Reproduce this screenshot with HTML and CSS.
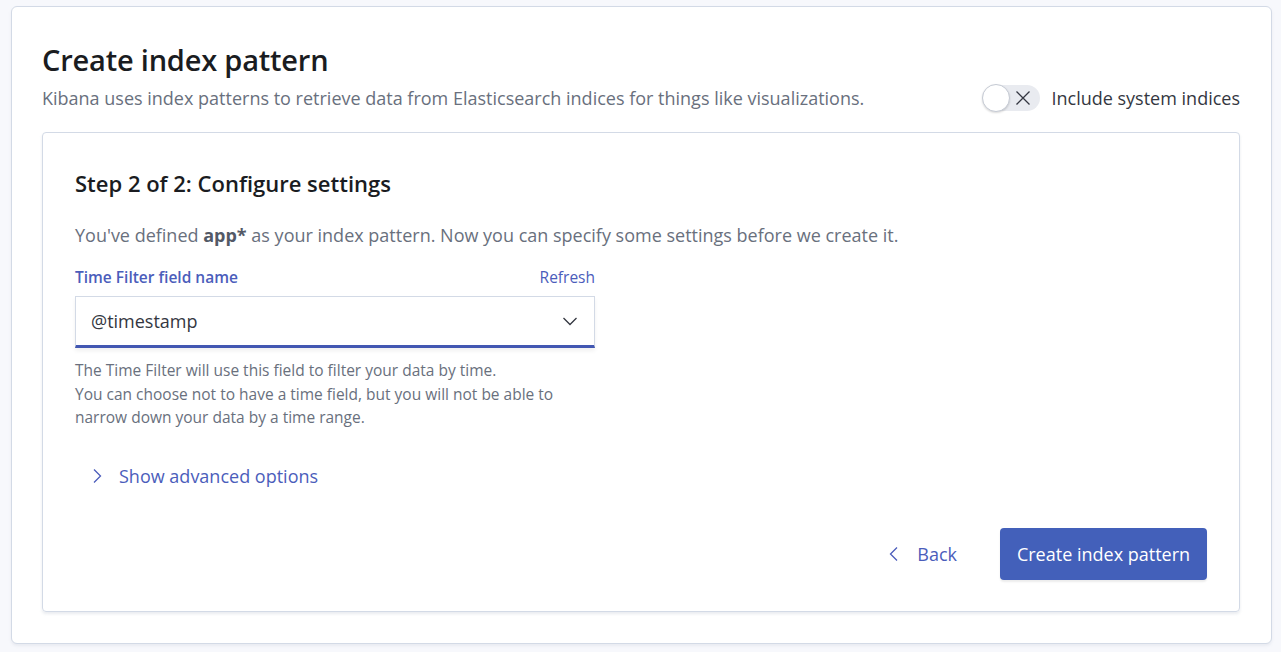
FILE: index.html
```html
<!DOCTYPE html>
<html lang="en">
<head>
<meta charset="utf-8">
<title>Create index pattern</title>
<link rel="stylesheet" href="styles.css">
</head>
<body>
<div class="page">
  <div class="outer">
    <div class="header">
      <div class="header-text">
        <h1 class="title">Create index pattern</h1>
        <p class="subtitle">Kibana uses index patterns to retrieve data from Elasticsearch indices for things like visualizations.</p>
      </div>
      <div class="toggle-wrap">
        <span class="switch">
          <span class="knob"></span>
          <svg class="switch-x" width="16" height="16" viewBox="0 0 16 16"><path d="M1.5 1.5 L14.5 14.5 M14.5 1.5 L1.5 14.5" stroke="#343741" stroke-width="1.3" fill="none"/></svg>
        </span>
        <span class="toggle-label">Include system indices</span>
      </div>
    </div>
    <div class="inner">
      <h2 class="step">Step 2 of 2: Configure settings</h2>
      <p class="desc">You've defined <strong>app*</strong> as your index pattern. Now you can specify some settings before we create it.</p>
      <div class="field">
        <div class="field-head">
          <span class="field-label">Time Filter field name</span>
          <span class="refresh">Refresh</span>
        </div>
        <div class="select">
          <span class="select-value">@timestamp</span>
          <svg class="select-chev" width="16" height="16" viewBox="0 0 16 16"><path d="M1.5 5 L8 11.5 L14.5 5" stroke="#343741" stroke-width="1.3" fill="none"/></svg>
        </div>
        <p class="help">The Time Filter will use this field to filter your data by time.<br>You can choose not to have a time field, but you will not be able to<br>narrow down your data by a time range.</p>
      </div>
      <div class="advanced">
        <svg width="16" height="16" viewBox="0 0 16 16"><path d="M5 1.5 L11.5 8 L5 14.5" stroke="#4b5dbb" stroke-width="1.3" fill="none"/></svg>
        <span>Show advanced options</span>
      </div>
      <div class="actions">
        <span class="back">
          <svg width="16" height="16" viewBox="0 0 16 16"><path d="M11 1.5 L4.5 8 L11 14.5" stroke="#4b5dbb" stroke-width="1.3" fill="none"/></svg>
          <span>Back</span>
        </span>
        <span class="primary">Create index pattern</span>
      </div>
    </div>
  </div>
</div>
</body>
</html>
```
FILE: styles.css
```css
* { box-sizing: border-box; }
html, body {
  margin: 0;
  padding: 0;
  background: #f7f8fc;
  font-family: "Open Sans", "Noto Sans", sans-serif;
  color: #343741;
}
.page {
  padding: 6px 9px 8px 11px;
  height: 652px;
}
.outer {
  background: #fff;
  border: 1px solid #d3dae6;
  border-radius: 6px;
  box-shadow: 0 2px 3px rgba(152, 162, 179, 0.15);
  padding: 35px 31px 32px 30px;
  height: 638px;
}
.header {
  display: flex;
  justify-content: space-between;
  align-items: flex-end;
  margin-bottom: 20px;
}
.title {
  margin: 0;
  font-size: 29px;
  font-weight: 600;
  line-height: 36px;
  color: #1a1c21;
  letter-spacing: -0.2px;
}
.subtitle {
  margin: 6px 0 0;
  font-size: 18px;
  line-height: 28px;
  color: #69707d;
}
.toggle-wrap {
  display: flex;
  align-items: center;
  gap: 11px;
  height: 28px;
}
.switch {
  position: relative;
  width: 56px;
  height: 26px;
  border-radius: 13px;
  background: #e9ebf0;
  display: inline-flex;
  align-items: center;
  justify-content: flex-end;
  padding-right: 9px;
}
.knob {
  position: absolute;
  left: -2px;
  top: -1px;
  width: 28px;
  height: 28px;
  border-radius: 50%;
  background: #fff;
  border: 1px solid #c5cad4;
  box-shadow: 0 1px 2px rgba(0,0,0,0.15);
}
.toggle-label {
  font-size: 18px;
  line-height: 28px;
  color: #343741;
}
.inner {
  border: 1px solid #d3dae6;
  border-radius: 4px;
  box-shadow: 0 2px 3px rgba(152, 162, 179, 0.2);
  padding: 31px 32px 31px;
}
.step {
  margin: 0;
  font-size: 22px;
  font-weight: 600;
  line-height: 38px;
  color: #1a1c21;
}
.desc {
  margin: 19px 0 0;
  font-size: 18px;
  line-height: 28px;
  color: #69707d;
}
.desc strong {
  color: #535966;
  font-weight: 700;
}
.field {
  width: 520px;
  margin-top: 17px;
}
.field-head {
  display: flex;
  justify-content: space-between;
  align-items: center;
  height: 22px;
  margin-bottom: 8px;
}
.field-label {
  font-size: 15.5px;
  font-weight: 600;
  color: #4b5dbb;
}
.refresh {
  font-size: 15.5px;
  color: #4b5dbb;
}
.select {
  height: 52px;
  border: 1px solid #d3dae6;
  border-bottom: 3px solid #4257b2;
  background: #fff;
  box-shadow: 0 3px 4px rgba(0, 0, 0, 0.06);
  display: flex;
  align-items: center;
  justify-content: space-between;
  padding: 0 16px 0 15px;
}
.select-value {
  font-size: 18px;
  color: #343741;
}
.help {
  margin: 11px 0 0;
  font-size: 15.5px;
  line-height: 23.5px;
  color: #69707d;
}
.advanced {
  display: flex;
  align-items: center;
  gap: 14px;
  margin-top: 33px;
  padding-left: 14px;
  font-size: 18px;
  color: #4b5dbb;
  height: 26px;
}
.actions {
  display: flex;
  justify-content: flex-end;
  align-items: center;
  margin-top: 39px;
}
.back {
  display: flex;
  align-items: center;
  gap: 15px;
  font-size: 18px;
  color: #4b5dbb;
  margin-right: 43px;
}
.primary {
  display: inline-flex;
  align-items: center;
  justify-content: center;
  width: 207px;
  height: 52px;
  border-radius: 4px;
  background: #4360ba;
  color: #fff;
  font-size: 18px;
  box-shadow: 0 2px 2px rgba(0,0,0,0.08);
}
```
